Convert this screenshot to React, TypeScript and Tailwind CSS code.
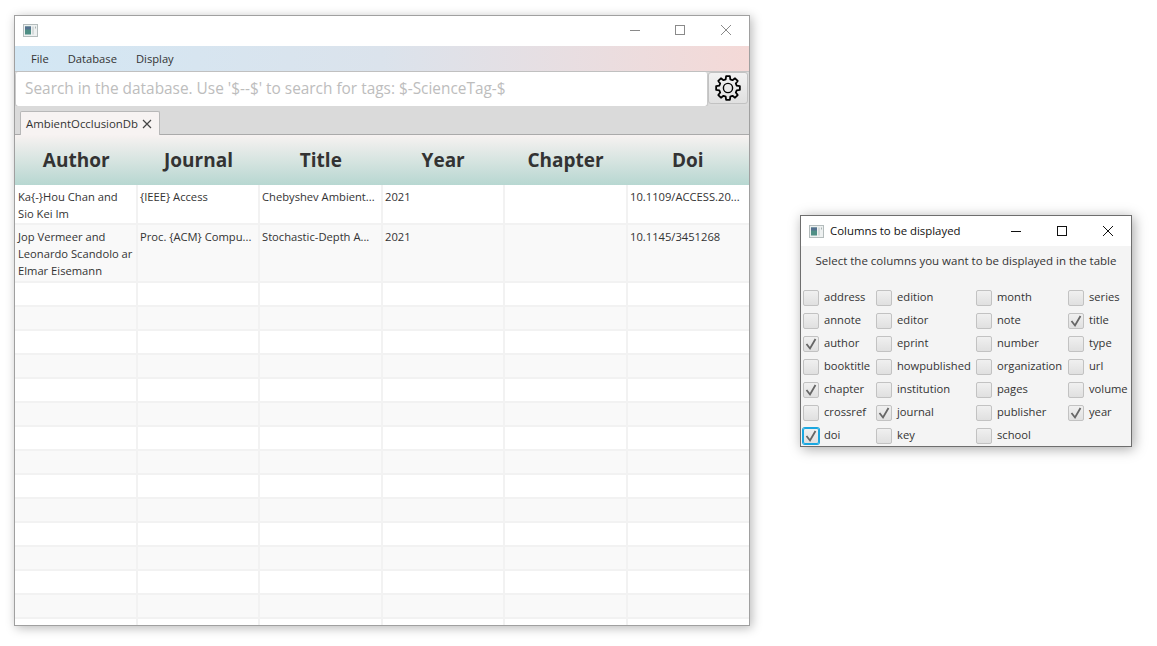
import React from "react";

const font = { fontFamily: '"Open Sans", "Noto Sans", sans-serif' };

function AppIcon() {
  return (
    <svg width="15" height="13" viewBox="0 0 15 13" className="shrink-0">
      <rect x="0.5" y="0.5" width="14" height="12" fill="#eef1f1" stroke="#b4bcbc" />
      <rect x="2" y="2.5" width="6" height="8" fill="#4f8f85" />
      <rect x="2" y="2.5" width="6" height="3" fill="#55708f" />
      <rect x="9" y="2.5" width="2" height="8" fill="#d5dbdb" />
      <rect x="12" y="2.5" width="1" height="2" fill="#aab4b4" />
    </svg>
  );
}

function gearPath() {
  const pts: string[] = [];
  const teeth = 8;
  const ro = 12;
  const ri = 9;
  for (let i = 0; i < teeth; i++) {
    const a = (i * 360) / teeth;
    const seq: [number, number][] = [
      [ri, a - 15],
      [ro, a - 9],
      [ro, a + 9],
      [ri, a + 15],
    ];
    for (const [r, d] of seq) {
      const t = ((d - 90) * Math.PI) / 180;
      pts.push(`${(13 + r * Math.cos(t)).toFixed(2)} ${(13 + r * Math.sin(t)).toFixed(2)}`);
    }
  }
  return `M${pts.join("L")}Z`;
}

function Gear() {
  return (
    <svg width="26" height="26" viewBox="0 0 26 26" fill="none" stroke="#000" strokeWidth="1.8" strokeLinejoin="round">
      <path d={gearPath()} />
      <circle cx="13" cy="13" r="4.6" strokeWidth="1.4" />
    </svg>
  );
}

const rows: { h: string; cells: string[][] }[] = [
  {
    h: "h-10",
    cells: [["Ka{-}Hou Chan and", "Sio Kei Im"], ["{IEEE} Access"], ["Chebyshev Ambient..."], ["2021"], [], ["10.1109/ACCESS.20..."]],
  },
  {
    h: "h-[58px]",
    cells: [["Jop Vermeer and", "Leonardo Scandolo ar", "Elmar Eisemann"], ["Proc. {ACM} Compu..."], ["Stochastic-Depth A..."], ["2021"], [], ["10.1145/3451268"]],
  },
];

const emptyRows = Array.from({ length: 15 }, (_, i) => i);
const headers = ["Author", "Journal", "Title", "Year", "Chapter", "Doi"];

function Cell({ lines }: { lines: string[] }) {
  return (
    <div className="min-w-0 border-r-2 border-[#f2f2f2] last:border-r-0 pl-[2px] first:pl-[3px] pt-[3px] overflow-hidden whitespace-nowrap text-[11.2px] leading-[17px] text-[#333]">
      {lines.map((l) => (
        <div key={l}>{l}</div>
      ))}
    </div>
  );
}

function Check({ label, on, focus }: { label: string; on?: boolean; focus?: boolean }) {
  return (
    <div className="flex items-center h-[23px] w-full">
      <div
        className={`relative w-4 h-4 shrink-0 rounded-[2px] border bg-gradient-to-b from-[#f0f0f0] to-[#e0e0e0] ${
          focus ? "border-[#1aa7e0] ring-1 ring-[#1aa7e0]" : "border-[#c2c2c2]"
        }`}
      >
        {on && (
          <svg viewBox="0 0 14 14" className="absolute inset-0 w-[14px] h-[14px]" fill="none" stroke="#666" strokeWidth="1.8">
            <path d="M2.5 7 6 11.5 11.5 2" />
          </svg>
        )}
      </div>
      <span className="ml-[5px] text-[11.2px] text-[#333] whitespace-nowrap">{label}</span>
    </div>
  );
}

const col1: [string, boolean?, boolean?][] = [["address"], ["annote"], ["author", true], ["booktitle"], ["chapter", true], ["crossref"], ["doi", true, true]];
const col2: [string, boolean?][] = [["edition"], ["editor"], ["eprint"], ["howpublished"], ["institution"], ["journal", true], ["key"]];
const col3: [string, boolean?][] = [["month"], ["note"], ["number"], ["organization"], ["pages"], ["publisher"], ["school"]];
const col4: [string, boolean?][] = [["series"], ["title", true], ["type"], ["url"], ["volume"], ["year", true]];

export default function App() {
  return (
    <div className="relative w-[1157px] h-[646px] bg-white overflow-hidden" style={font}>
      {/* Main window */}
      <div className="absolute left-[14px] top-[15px] w-[736px] h-[611px] flex flex-col border border-[#a0a0a0] bg-white shadow-[2px_2px_10px_rgba(0,0,0,0.28)] overflow-hidden">
        <div className="h-[30px] shrink-0 flex items-center bg-white pl-[8px] pb-[2px]">
          <AppIcon />
          <div className="ml-auto flex items-center">
            <svg width="46" height="14" viewBox="0 0 46 14" fill="none" stroke="#8a8a8a">
              <path d="M19 7.5h10" />
            </svg>
            <svg width="46" height="14" viewBox="0 0 46 14" fill="none" stroke="#8a8a8a">
              <rect x="18.5" y="2.5" width="9" height="9" />
            </svg>
            <svg width="46" height="14" viewBox="0 0 46 14" fill="none" stroke="#8a8a8a">
              <path d="M18 2l10 10M28 2 18 12" />
            </svg>
          </div>
        </div>
        <div className="h-[25px] shrink-0 flex items-center gap-[19px] pl-4 pt-px text-[11.2px] text-[#333] bg-gradient-to-r from-[#d3e7f4] via-[#dbe3ec] to-[#f4d9d7]">
          <span>File</span>
          <span>Database</span>
          <span>Display</span>
        </div>
        <div className="h-[35px] shrink-0 flex border-t border-[#c4c4c4] bg-[#dcdcdc]">
          <div className="flex-1 h-[34px] flex items-center bg-white rounded-[2px] pl-[9px] ml-px text-[15.4px] text-[#bdbdbd] whitespace-nowrap overflow-hidden shadow-[0_1px_2px_rgba(0,0,0,0.3)]">
            Search in the database. Use '$--$' to search for tags: $-ScienceTag-$
          </div>
          <div className="w-10 h-8 ml-px mr-px flex items-center justify-center rounded-[3px] border border-[#c2c2c2] bg-gradient-to-b from-[#f2f2f2] to-[#e0e0e0]">
            <Gear />
          </div>
        </div>
        <div className="h-[29px] shrink-0 flex items-end pl-[5px] bg-[#dadada] border-b border-[#aaa]">
          <div className="h-[24px] w-[140px] -mb-px flex items-center pl-[5px] pt-px bg-[#f7f3f2] border border-b-0 border-[#b8b8b8] rounded-t-[2px] text-[11.4px] text-[#333] whitespace-nowrap">
            AmbientOcclusionDb
            <svg width="10" height="10" viewBox="0 0 10 10" className="ml-[4px]" fill="none" stroke="#444" strokeWidth="1.2">
              <path d="M1 1l8 8M9 1 1 9" />
            </svg>
          </div>
        </div>
        <div className="h-[50px] shrink-0 flex items-center bg-gradient-to-b from-[#f7f2f1] to-[#b7d7d1]">
          {headers.map((h) => (
            <div key={h} className="flex-1 text-center text-[19px] font-bold text-[#333]">
              {h}
            </div>
          ))}
        </div>
        <div className="flex-1 min-h-0 overflow-hidden">
          {rows.map((r, i) => (
            <div
              key={i}
              className={`grid grid-cols-[123px_122px_123px_122px_123px_121px] ${r.h} border-b-2 border-[#f2f2f2] ${i % 2 ? "bg-[#f9f9f9]" : "bg-white"}`}
            >
              {r.cells.map((c, j) => (
                <Cell key={j} lines={c} />
              ))}
            </div>
          ))}
          {emptyRows.map((i) => (
            <div
              key={i}
              className={`grid grid-cols-[123px_122px_123px_122px_123px_121px] h-6 border-b-2 border-[#f2f2f2] ${i % 2 ? "bg-[#f9f9f9]" : "bg-white"}`}
            >
              {headers.map((h) => (
                <Cell key={h} lines={[]} />
              ))}
            </div>
          ))}
        </div>
      </div>

      {/* Columns dialog */}
      <div className="absolute left-[800px] top-[215px] w-[332px] h-[232px] flex flex-col border border-[#6e6e6e] bg-[#f4f4f4] shadow-[2px_2px_12px_rgba(0,0,0,0.35)]">
        <div className="h-[30px] shrink-0 flex items-center bg-white pl-[8px] text-[11.4px] text-[#111]">
          <AppIcon />
          <span className="ml-[6px] whitespace-nowrap">Columns to be displayed</span>
          <div className="ml-auto flex items-center">
            <svg width="46" height="14" viewBox="0 0 46 14" fill="none" stroke="#111">
              <path d="M18 7.5h10" />
            </svg>
            <svg width="46" height="14" viewBox="0 0 46 14" fill="none" stroke="#111">
              <rect x="18.5" y="2.5" width="9" height="9" />
            </svg>
            <svg width="46" height="14" viewBox="0 0 46 14" fill="none" stroke="#111">
              <path d="M18 2l10 10M28 2 18 12" />
            </svg>
          </div>
        </div>
        <div className="h-10 shrink-0 flex items-center justify-center pb-[10px] text-[11.5px] text-[#333] whitespace-nowrap">
          Select the columns you want to be displayed in the table
        </div>
        <div className="flex pl-[2px]">
          <div className="flex flex-col w-[73px]">
            {col1.map(([l, on, f]) => (
              <Check key={l} label={l} on={on} focus={f} />
            ))}
          </div>
          <div className="flex flex-col w-[100px]">
            {col2.map(([l, on]) => (
              <Check key={l} label={l} on={on} />
            ))}
          </div>
          <div className="flex flex-col w-[92px]">
            {col3.map(([l, on]) => (
              <Check key={l} label={l} on={on} />
            ))}
          </div>
          <div className="flex flex-col w-[60px]">
            {col4.map(([l, on]) => (
              <Check key={l} label={l} on={on} />
            ))}
          </div>
        </div>
      </div>
    </div>
  );
}
